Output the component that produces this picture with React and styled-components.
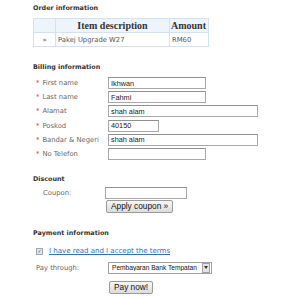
import React from 'react';
import styled, { createGlobalStyle } from 'styled-components';

const GlobalStyle = createGlobalStyle`
    body {
        margin: 0;
        background: #ffffff;
        font-family: "DejaVu Sans", Verdana, sans-serif;
    }
`;

const Page = styled.div`
    width: 300px;
    height: 300px;
    padding: 4px 0 0 33px;
    box-sizing: border-box;
    overflow: hidden;
`;

const SectionTitle = styled.div`
    font-size: 6.4px;
    font-weight: bold;
    color: #333;
    height: 9px;
    line-height: 9px;
    margin-top: ${(p) => p.$top || 0}px;
`;

const Table = styled.table`
    border-collapse: collapse;
    margin-top: 5px;
    width: 176px;
`;

const HeadCell = styled.th`
    background: #eef4fc;
    border: 1px solid #d2e2f6;
    font-family: "Liberation Serif", serif;
    font-size: 10px;
    font-weight: bold;
    color: #333;
    height: 13px;
    padding: 0 1px;
    text-align: ${(p) => p.$align || 'center'};
    width: ${(p) => p.$w || 'auto'};
`;

const Cell = styled.td`
    border: 1px solid #d2e2f6;
    font-size: 6.8px;
    color: #555;
    height: 13px;
    padding: 0 2px;
    text-align: ${(p) => p.$align || 'left'};
`;

const Form = styled.div`
    display: flex;
    flex-direction: column;
    gap: 2px;
    margin-top: ${(p) => p.$top ?? 5}px;
`;

const Row = styled.div`
    display: flex;
    align-items: center;
    height: 12.2px;
`;

const Label = styled.div`
    width: ${(p) => p.$w || 75}px;
    padding-left: ${(p) => p.$pl ?? 3}px;
    box-sizing: border-box;
    font-size: 6.8px;
    color: #666;
    white-space: nowrap;
`;

const Star = styled.span`
    color: #d0231e;
    margin-right: 3px;
`;

const Input = styled.input`
    width: ${(p) => p.$w}px;
    height: 12px;
    box-sizing: border-box;
    border: 1px solid #a8a8a8;
    border-top-color: #909090;
    padding: 0 2px;
    font-family: "Liberation Sans", Arial, sans-serif;
    font-size: 7.3px;
    color: #222;
    outline: none;
`;

const Button = styled.button`
    display: block;
    box-sizing: border-box;
    height: 13px;
    padding: 0 4px;
    border: 1px solid #9a9a9a;
    border-radius: 2px;
    background: linear-gradient(#f6f6f6, #dcdcdc);
    font-family: "Liberation Sans", Arial, sans-serif;
    font-size: 8.3px;
    color: #111;
    line-height: 11px;
    margin-left: ${(p) => p.$ml || 0}px;
    margin-top: ${(p) => p.$top || 0}px;
`;

const Check = styled.span`
    display: inline-block;
    width: 5px;
    height: 5px;
    border: 1px solid #9aa;
    background: #e6e6e6;
    font-size: 5px;
    line-height: 5px;
    color: #557;
    text-align: center;
    margin: 0 6px 0 3px;
`;

const TermsLink = styled.a`
    font-size: 7px;
    color: #2a6fd6;
    text-decoration: underline;
`;

const Select = styled.div`
    display: flex;
    align-items: center;
    width: 104px;
    height: 12px;
    box-sizing: border-box;
    border: 1px solid #a0a0a0;
    font-family: "Liberation Sans", Arial, sans-serif;
    font-size: 6.6px;
    color: #111;
`;

const SelectText = styled.span`
    flex: 1;
    padding-left: 3px;
    white-space: nowrap;
    overflow: hidden;
`;

const SelectArrow = styled.span`
    width: 8px;
    height: 10px;
    margin-right: 1px;
    border: 1px solid #a0a0a0;
    box-sizing: border-box;
    background: #e4e4e4;
    display: flex;
    align-items: center;
    justify-content: center;
`;

const billing = [
    { label: 'First name', value: 'Ikhwan', w: 98 },
    { label: 'Last name', value: 'Fahmi', w: 98 },
    { label: 'Alamat', value: 'shah alam', w: 150 },
    { label: 'Poskod', value: '40150', w: 51 },
    { label: 'Bandar & Negeri', value: 'shah alam', w: 150 },
    { label: 'No Telefon', value: '', w: 98 },
];

export default function App() {
    return (
        <Page>
            <GlobalStyle />
            <SectionTitle>Order information</SectionTitle>
            <Table>
                <thead>
                    <tr>
                        <HeadCell $w="19px" />
                        <HeadCell>Item description</HeadCell>
                        <HeadCell $w="36px" $align="left">Amount</HeadCell>
                    </tr>
                </thead>
                <tbody>
                    <tr>
                        <Cell $align="center">»</Cell>
                        <Cell>Pakej Upgrade W27</Cell>
                        <Cell>RM60</Cell>
                    </tr>
                </tbody>
            </Table>

            <SectionTitle $top={16}>Billing information</SectionTitle>
            <Form>
                {billing.map((f) => (
                    <Row key={f.label}>
                        <Label>
                            <Star>*</Star>
                            {f.label}
                        </Label>
                        <Input $w={f.w} defaultValue={f.value} />
                    </Row>
                ))}
            </Form>

            <SectionTitle $top={15}>Discount</SectionTitle>
            <Form $top={3}>
                <Row>
                    <Label $w={72} $pl={10}>Coupon:</Label>
                    <Input $w={82} defaultValue="" />
                </Row>
            </Form>
            <Button $ml={73} $top={1}>Apply coupon »</Button>

            <SectionTitle $top={16}>Payment information</SectionTitle>
            <Form $top={7}>
                <Row>
                    <Check>✓</Check>
                    <TermsLink href="#">I have read and I accept the terms</TermsLink>
                </Row>
            </Form>
            <Form $top={4}>
                <Row>
                    <Label $w={75} $pl={3}>Pay through:</Label>
                    <Select>
                        <SelectText>Pembayaran Bank Tempatan</SelectText>
                        <SelectArrow>
                            <svg width="4" height="3" viewBox="0 0 4 3">
                                <path d="M0 0h4L2 3z" fill="#333" />
                            </svg>
                        </SelectArrow>
                    </Select>
                </Row>
            </Form>
            <Button $ml={76} $top={7}>Pay now!</Button>
        </Page>
    );
}
